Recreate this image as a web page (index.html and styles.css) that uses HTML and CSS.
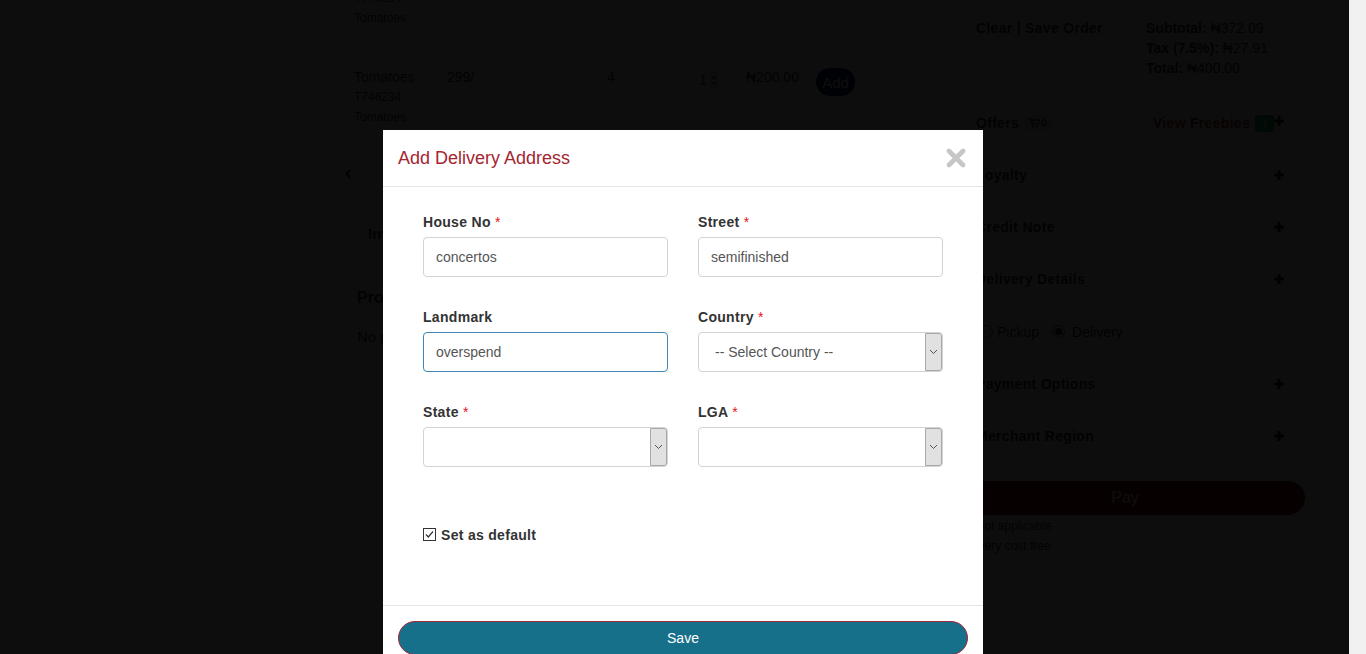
FILE: index.html
```html
<!DOCTYPE html>
<html lang="en">
<head>
<meta charset="utf-8">
<title>Add Delivery Address</title>
<link rel="stylesheet" href="styles.css">
</head>
<body>
<div class="page">
  <div class="content">
    <div class="left">
      <div class="prod-partial">
        <div class="code">T746234</div>
        <div class="sub">Tomatoes</div>
      </div>
      <div class="prod-row">
        <div class="cell">
          <div class="pname">Tomatoes</div>
          <div class="code">T746234</div>
          <div class="sub">Tomatoes</div>
        </div>
        <div class="cell">299/</div>
        <div class="cell">4</div>
        <div class="cell">
          <div class="qty"><span class="qty-val">1</span><span class="spin"><span>&#9652;</span><span>&#9662;</span></span></div>
        </div>
        <div class="cell">&#8358;200.00</div>
        <div class="cell"><button class="add-btn">Add</button></div>
      </div>
      <div class="pager">
        <span class="pager-prev">&lsaquo;</span>
        <span class="pager-box"></span>
      </div>
      <div class="tab-line">Invoice</div>
      <h3 class="products-title">Products</h3>
      <p class="no-products">No products selected</p>
    </div>
    <div class="right">
      <div class="summary">
        <div class="actions">Clear | Save Order</div>
        <div class="totals">
          <div><b>Subtotal:</b> &#8358;372.09</div>
          <div><b>Tax (7.5%):</b> &#8358;27.91</div>
          <div><b>Total:</b> &#8358;400.00</div>
        </div>
      </div>
      <div class="sec">
        <div class="sec-left"><span class="sec-title">Offers</span>
          <span class="badge-grey"><svg width="11" height="10" viewBox="0 0 11 10"><path d="M0 1h2l1.5 5h5.5l1.5-4H3" fill="none" stroke="#333" stroke-width="1.3"/><circle cx="4" cy="8.5" r="1" fill="#333"/><circle cx="8" cy="8.5" r="1" fill="#333"/></svg>0</span>
        </div>
        <div class="sec-right"><span class="freebies">View Freebies</span><span class="badge-green">1</span><svg class="plus" width="10" height="10" viewBox="0 0 10 10"><path d="M5 0v10M0 5h10" stroke="#222" stroke-width="3"/></svg></div>
      </div>
      <div class="sec"><span class="sec-title">Loyalty</span><svg class="plus" width="10" height="10" viewBox="0 0 10 10"><path d="M5 0v10M0 5h10" stroke="#222" stroke-width="3"/></svg></div>
      <div class="sec"><span class="sec-title">Credit Note</span><svg class="plus" width="10" height="10" viewBox="0 0 10 10"><path d="M5 0v10M0 5h10" stroke="#222" stroke-width="3"/></svg></div>
      <div class="sec"><span class="sec-title">Delivery Details</span><svg class="plus" width="10" height="10" viewBox="0 0 10 10"><path d="M5 0v10M0 5h10" stroke="#222" stroke-width="3"/></svg></div>
      <div class="radios">
        <span class="radio"></span><span>Pickup</span>
        <span class="radio on"></span><span>Delivery</span>
      </div>
      <div class="sec"><span class="sec-title">Payment Options</span><svg class="plus" width="10" height="10" viewBox="0 0 10 10"><path d="M5 0v10M0 5h10" stroke="#222" stroke-width="3"/></svg></div>
      <div class="sec"><span class="sec-title">Merchant Region</span><svg class="plus" width="10" height="10" viewBox="0 0 10 10"><path d="M5 0v10M0 5h10" stroke="#222" stroke-width="3"/></svg></div>
      <button class="pay-btn">Pay</button>
      <div class="notes">
        <div>Tip not applicable</div>
        <div>Delivery cost free</div>
      </div>
    </div>
  </div>
</div>
<div class="scrollbar"></div>

<div class="backdrop"></div>

<div class="modal">
  <div class="modal-header">
    <h4 class="modal-title">Add Delivery Address</h4>
    <svg class="close" width="20" height="20" viewBox="0 0 20 20"><path d="M3 3L17 17M17 3L3 17" stroke="#c6c6c6" stroke-width="4.6" stroke-linecap="round"/></svg>
  </div>
  <div class="modal-body">
    <div class="fields">
      <div class="field">
        <label class="lbl">House No <span class="req">*</span></label>
        <div class="input">concertos</div>
      </div>
      <div class="field">
        <label class="lbl">Street <span class="req">*</span></label>
        <div class="input">semifinished</div>
      </div>
      <div class="field">
        <label class="lbl">Landmark</label>
        <div class="input focus">overspend</div>
      </div>
      <div class="field">
        <label class="lbl">Country <span class="req">*</span></label>
        <div class="select"><span class="select-text">-- Select Country --</span><span class="select-btn"><svg width="9" height="6" viewBox="0 0 9 6"><path d="M1 1l3.5 3.5L8 1" fill="none" stroke="#555" stroke-width="1"/></svg></span></div>
      </div>
      <div class="field">
        <label class="lbl">State <span class="req">*</span></label>
        <div class="select"><span class="select-text"></span><span class="select-btn"><svg width="9" height="6" viewBox="0 0 9 6"><path d="M1 1l3.5 3.5L8 1" fill="none" stroke="#555" stroke-width="1"/></svg></span></div>
      </div>
      <div class="field">
        <label class="lbl">LGA <span class="req">*</span></label>
        <div class="select"><span class="select-text"></span><span class="select-btn"><svg width="9" height="6" viewBox="0 0 9 6"><path d="M1 1l3.5 3.5L8 1" fill="none" stroke="#555" stroke-width="1"/></svg></span></div>
      </div>
    </div>
    <div class="default-row">
      <svg class="check" width="13" height="13" viewBox="0 0 13 13"><rect x="0.5" y="0.5" width="12" height="12" fill="#fff" stroke="#333"/><path d="M3 6.5l2.3 2.5L10 3.5" fill="none" stroke="#333" stroke-width="1.2"/></svg>
      <span class="lbl">Set as default</span>
    </div>
  </div>
  <div class="modal-footer">
    <button class="save-btn">Save</button>
  </div>
</div>
</body>
</html>
```

FILE: styles.css
```css
* { box-sizing: border-box; }

html, body { height: 654px; }

body {
  margin: 0;
  display: flex;
  overflow: hidden;
  background: #fff;
  color: #333;
  font-family: "Liberation Sans", Arial, sans-serif;
  font-size: 14px;
  line-height: 20px;
}

.page { flex: 1; min-width: 0; }

.scrollbar { flex: none; width: 17px; background: #f1f1f1; }

.content {
  display: flex;
  margin-left: 340px;
}

/* left column (underneath) */
.left { width: 605px; flex: none; }

.prod-partial { margin-top: -12px; padding-left: 14px; }

.code { font-size: 12px; line-height: 20px; }
.sub { font-size: 12px; line-height: 20px; }
.pname { font-size: 14px; line-height: 20px; }

.prod-row {
  display: grid;
  grid-template-columns: 93px 160px 66px 73px 70px auto;
  margin-top: 39px;
  padding-left: 14px;
  align-items: start;
}

.qty {
  width: 57px;
  height: 24px;
  margin-top: 1px;
  border: 1px solid #ccc;
  display: flex;
  align-items: center;
  justify-content: flex-end;
  padding-right: 12px;
  gap: 4px;
}
.qty-val { font-size: 14px; }
.spin { display: flex; flex-direction: column; font-size: 7px; line-height: 7px; border: 1px solid #bbb; }

.add-btn {
  height: 28px;
  width: 39px;
  margin-top: 1px;
  border: 0;
  border-radius: 14px;
  background: #0d1b5e;
  color: #fff;
  font-family: inherit;
  font-size: 15px;
  padding: 0;
}

.pager { display: flex; align-items: center; gap: 14px; margin-top: 35px; padding-left: 5px; height: 20px; }
.pager-prev { font-size: 20px; font-weight: bold; }
.pager-box { width: 18px; height: 15px; border: 1px solid #ccc; background: #eee; }

.tab-line { margin-top: 42px; padding-left: 28px; font-size: 15px; font-weight: bold; }

.products-title { margin: 43px 0 0; padding-left: 17px; font-size: 16px; line-height: 22px; }

.no-products { margin: 18px 0 0; padding-left: 17px; font-size: 15px; }

/* right column (underneath) */
.right { width: 375px; flex: none; }

.summary { display: flex; padding: 18px 0 0 31px; height: 97px; }
.actions { width: 170px; font-weight: bold; letter-spacing: 0.3px; }
.totals { font-size: 14px; }

.sec {
  height: 52px;
  display: flex;
  align-items: center;
  justify-content: space-between;
  padding: 0 36px 0 31px;
}
.sec-left, .sec-right { display: flex; align-items: center; }
.sec-title { font-weight: bold; letter-spacing: 0.3px; }
.badge-grey {
  margin-left: 5px;
  display: inline-flex;
  align-items: center;
  gap: 1px;
  height: 16px;
  padding: 0 5px;
  background: #ddd;
  border-radius: 3px;
  font-size: 11px;
  font-weight: bold;
}
.freebies { color: #a52a2a; font-weight: bold; letter-spacing: 0.3px; }
.badge-green {
  margin-left: 5px;
  width: 19px;
  height: 17px;
  background: #00a65a;
  color: #fff;
  font-size: 11px;
  line-height: 17px;
  text-align: center;
  border-radius: 2px;
}
.sec-right .plus { margin-top: -4px; }

.radios {
  height: 53px;
  display: flex;
  align-items: center;
  padding-left: 35px;
  gap: 4px;
}
.radio { width: 13px; height: 13px; border: 1px solid #555; border-radius: 50%; position: relative; }
.radio.on::after { content: ""; position: absolute; left: 2px; top: 2px; width: 7px; height: 7px; border-radius: 50%; background: #333; }
.radios .radio.on { margin-left: 9px; margin-right: 3px; }

.pay-btn {
  display: block;
  margin-top: 19px;
  width: 360px;
  height: 34px;
  border: 0;
  border-radius: 17px;
  background: #8b0000;
  color: #fff;
  font-family: inherit;
  font-size: 16px;
}

.notes { padding-left: 13px; font-size: 12px; line-height: 20px; margin-top: 1px; }

/* backdrop */
.backdrop {
  position: fixed;
  left: 0;
  top: 0;
  right: 17px;
  bottom: 0;
  background: rgba(0, 0, 0, 0.95);
}

/* modal */
.modal {
  position: fixed;
  left: 383px;
  top: 130px;
  width: 600px;
  background: #fff;
}

.modal-header {
  display: flex;
  align-items: center;
  justify-content: space-between;
  padding: 15px 17px 15px 15px;
  border-bottom: 1px solid #e5e5e5;
}

.modal-title {
  margin: 0;
  font-size: 18px;
  line-height: 26px;
  font-weight: normal;
  color: #a4262f;
}

.close { display: block; margin-top: -1px; }

.modal-body { padding: 25px 40px 0; height: 418px; }

.fields {
  display: grid;
  grid-template-columns: 245px 245px;
  column-gap: 30px;
  row-gap: 30px;
}

.field { display: flex; flex-direction: column; }

.lbl {
  font-weight: bold;
  font-size: 14px;
  line-height: 20px;
  letter-spacing: 0.3px;
  color: #333;
  margin-bottom: 5px;
}
.req { color: #e4131b; font-weight: normal; letter-spacing: 0; }

.input {
  height: 40px;
  border: 1px solid #d2d3da;
  border-radius: 4px;
  padding: 0 12px;
  font-size: 14px;
  line-height: 38px;
  color: #555;
}
.input.focus { border-color: #3f86b5; }

.select {
  height: 40px;
  border: 1px solid #d2d3da;
  border-radius: 4px;
  display: flex;
  color: #555;
}
.select-text { flex: 1; padding-left: 16px; line-height: 38px; font-size: 14px; }
.select-btn {
  width: 17px;
  background: #e1e1e1;
  border: 1px solid #a9a9a9;
  border-radius: 0 3px 3px 0;
  display: flex;
  align-items: center;
  justify-content: center;
}

.default-row {
  display: flex;
  align-items: center;
  gap: 5px;
  margin-top: 58px;
  height: 20px;
}
.default-row .lbl { margin-bottom: 0; }
.check { flex: none; margin-top: -1px; }

.modal-footer {
  border-top: 1px solid #e5e5e5;
  padding: 15px;
}

.save-btn {
  display: block;
  width: 100%;
  height: 34px;
  border: 1px solid #a3283a;
  border-radius: 20px;
  background: #17708a;
  color: #fff;
  font-family: "Liberation Sans", Arial, sans-serif;
  font-size: 14px;
}
```
